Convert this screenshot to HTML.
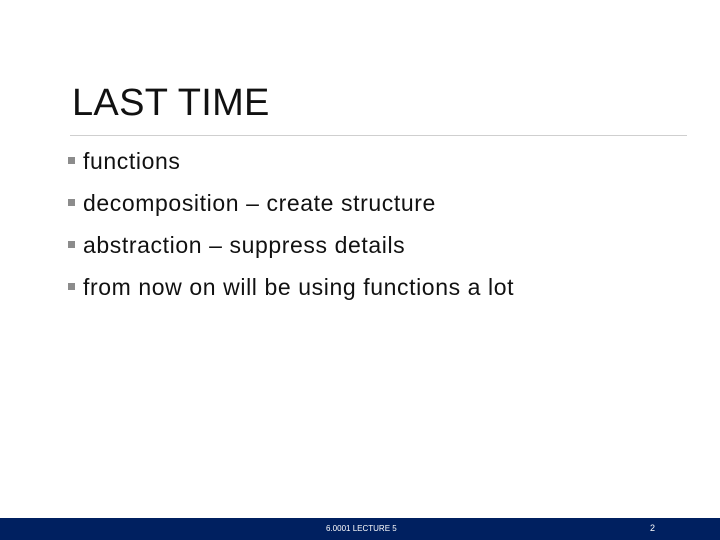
<!DOCTYPE html>
<html><head><style>
body{margin:0;width:720px;height:540px;background:#fff;position:relative;overflow:hidden;font-family:"Liberation Sans",sans-serif;}
.t{position:absolute;left:72px;top:82px;font-size:38px;color:#111;letter-spacing:0.3px;}
.hr{position:absolute;left:70px;top:135px;width:617px;height:1px;background:#cfcfcf;}
.b{position:absolute;left:83px;font-size:23px;color:#111;white-space:nowrap;letter-spacing:0.6px;}
.b:before{content:"";position:absolute;left:-15px;top:9px;width:7px;height:7px;background:#8c8c8c;}
.f{position:absolute;left:0;top:518px;width:720px;height:22px;background:#002060;color:#fff;font-size:8px;}
</style></head><body>
<div class="t">LAST TIME</div>
<div class="hr"></div>
<div class="b" style="top:148px">functions</div>
<div class="b" style="top:190px">decomposition – create structure</div>
<div class="b" style="top:232px">abstraction – suppress details</div>
<div class="b" style="top:274px">from now on will be using functions a lot</div>
<div class="f"><span style="position:absolute;left:326px;top:6px">6.0001 LECTURE 5</span><span style="position:absolute;left:650px;top:5px;font-size:9px">2</span></div>
</body></html>
